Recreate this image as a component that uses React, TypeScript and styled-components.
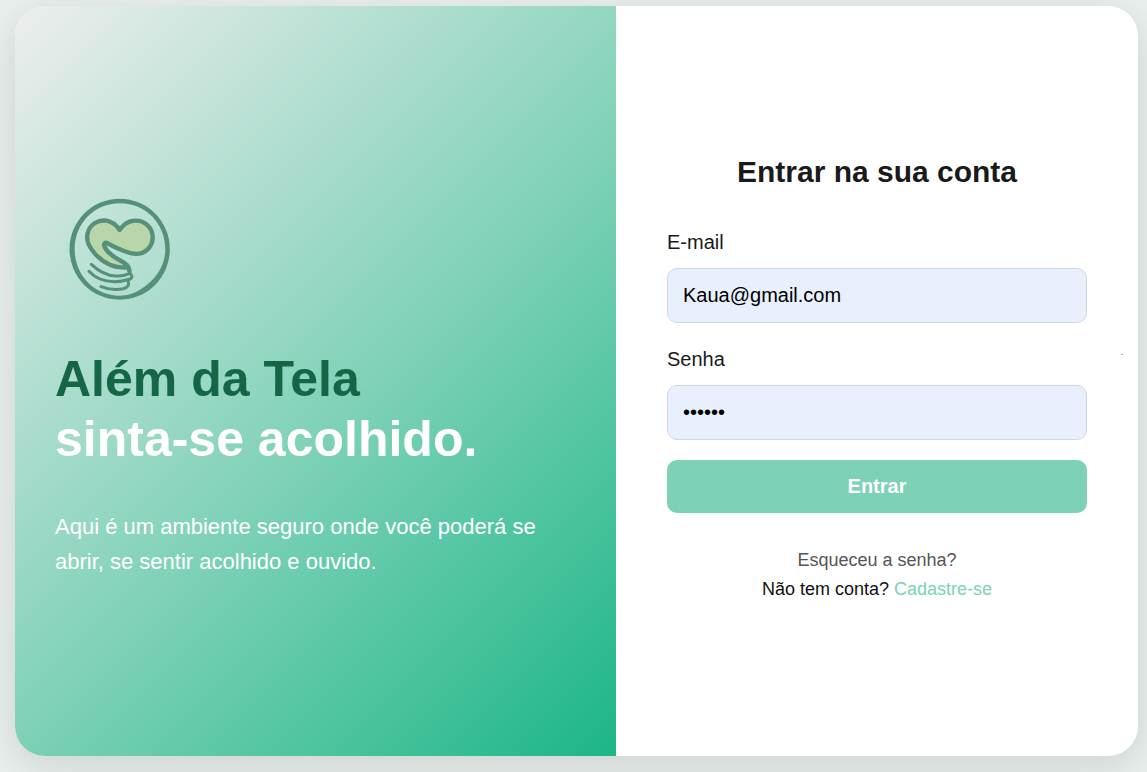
import React from 'react';
import styled, { createGlobalStyle } from 'styled-components';

const GlobalStyle = createGlobalStyle`
  * { box-sizing: border-box; }
  body {
    margin: 0;
    font-family: Arial, "Liberation Sans", sans-serif;
    color: #111;
    background: #e8efec;
  }
  input, button { font-family: inherit; }
`;

const Page = styled.main`
  min-height: 100vh;
  display: flex;
  padding: 6px 9px 16px 15px;
`;

const Card = styled.div`
  position: relative;
  flex: 1;
  display: grid;
  grid-template-columns: 601fr 522fr;
  border-radius: 30px;
  overflow: hidden;
  background: #fff;
  box-shadow: 0 10px 40px rgba(0, 0, 0, 0.12);
`;

const Welcome = styled.section`
  display: flex;
  flex-direction: column;
  justify-content: center;
  padding: 40px;
  color: #fff;
  background: linear-gradient(135deg, #eeeeee 0%, #7dd1b7 55%, #1cb688 100%);
`;

const Logo = styled.svg`
  width: 130px;
  height: 130px;
  margin-bottom: 35px;
`;

const Headline = styled.h1`
  margin: 0 0 40px;
  font-size: 50px;
  line-height: 60px;
`;

const Brand = styled.span`
  display: block;
  color: #146647;
`;

const Description = styled.p`
  margin: 0;
  font-size: 22px;
  line-height: 35px;
`;

const Access = styled.section`
  display: flex;
  align-items: center;
  justify-content: center;
  padding: 40px;
`;

const Form = styled.form`
  width: 100%;
  max-width: 420px;
  display: flex;
  flex-direction: column;
`;

const Title = styled.h2`
  margin: 0 0 42px;
  font-size: 30px;
  line-height: 34px;
  text-align: center;
  color: #1a1a1a;
`;

const Field = styled.div`
  display: flex;
  flex-direction: column;
  gap: 14px;
  margin-bottom: 25px;

  &:last-of-type { margin-bottom: 20px; }
`;

const Label = styled.label`
  font-size: 20px;
  line-height: 23px;
  color: #1a1a1a;
`;

const Input = styled.input`
  width: 100%;
  height: 55px;
  padding: 0 15px;
  border: 1px solid #cfd8e6;
  border-radius: 10px;
  background: #e8f0fe;
  color: #000;
  font-size: 20px;
`;

const Submit = styled.button`
  height: 53px;
  border: 0;
  border-radius: 10px;
  background: #7dd1b7;
  color: #fff;
  font-size: 20px;
  font-weight: bold;
  cursor: pointer;
`;

const Links = styled.footer`
  margin: 33px 0 3px;
  text-align: center;
  font-size: 18px;
  line-height: 29px;
`;

const Line = styled.p`
  margin: 0;
`;

const Link = styled.a<{ $accent?: boolean }>`
  color: ${({ $accent }) => ($accent ? '#7dd1b7' : '#555')};
  text-decoration: none;
`;

const Speck = styled.span`
  position: absolute;
  top: 348px;
  right: 15px;
  width: 2px;
  height: 1px;
  background: #ff8a5c;
`;

export default function App() {
  return (
    <>
      <GlobalStyle />
      <Page>
        <Card>
          <Welcome>
            <Logo viewBox="-15 -18 390 390" role="img" aria-label="Além da Tela" fill="none" stroke="#549178" strokeLinecap="round" strokeLinejoin="round">
              <path
                fill="#549178"
                stroke="none"
                fillRule="evenodd"
                d="M179 26A150 151 0 1 1 179 329A150 151 0 1 1 179 26ZM180 40C102 40 44 101 44 178C44 256 104 317 178 317C211 317 237 304 260 285C291 262 316 223 316 178C316 101 257 40 180 40Z"
              />
              <path
                fill="#b9d6ab"
                strokeWidth="13"
                d="M196 233C165 233 130 220 104 190C85 169 78 149 83 130C89 101 116 89 139 92C158 95 170 106 179 120C189 105 203 93 224 92C252 91 275 109 278 138C280 160 267 181 248 188C230 195 211 191 192 183C173 175 155 167 143 160C136 156 130 160 133 168C139 187 160 200 178 210C195 219 211 229 207 241"
              />
              <path strokeWidth="9" d="M94 223C113 241 137 257 168 258C184 259 196 256 207 251C211 249 212 242 208 237" />
              <path strokeWidth="9" d="M87 244C105 264 129 275 162 275C181 275 198 271 211 267C219 262 216 253 208 251" />
              <path strokeWidth="9" d="M123 290C143 298 168 300 190 296C204 293 209 284 204 273" />
            </Logo>
            <Headline>
              <Brand>Além da Tela</Brand>
              sinta-se acolhido.
            </Headline>
            <Description>
              Aqui é um ambiente seguro onde você poderá se abrir, se sentir acolhido e ouvido.
            </Description>
          </Welcome>
          <Access>
            <Form onSubmit={(event) => event.preventDefault()}>
              <Title>Entrar na sua conta</Title>
              <Field>
                <Label htmlFor="email">E-mail</Label>
                <Input id="email" type="email" defaultValue="Kaua@gmail.com" />
              </Field>
              <Field>
                <Label htmlFor="senha">Senha</Label>
                <Input id="senha" type="password" defaultValue="123456" />
              </Field>
              <Submit type="submit">Entrar</Submit>
              <Links>
                <Line><Link href="#recuperar">Esqueceu a senha?</Link></Line>
                <Line>Não tem conta? <Link $accent href="#cadastro">Cadastre-se</Link></Line>
              </Links>
            </Form>
          </Access>
          <Speck aria-hidden="true" />
        </Card>
      </Page>
    </>
  );
}
